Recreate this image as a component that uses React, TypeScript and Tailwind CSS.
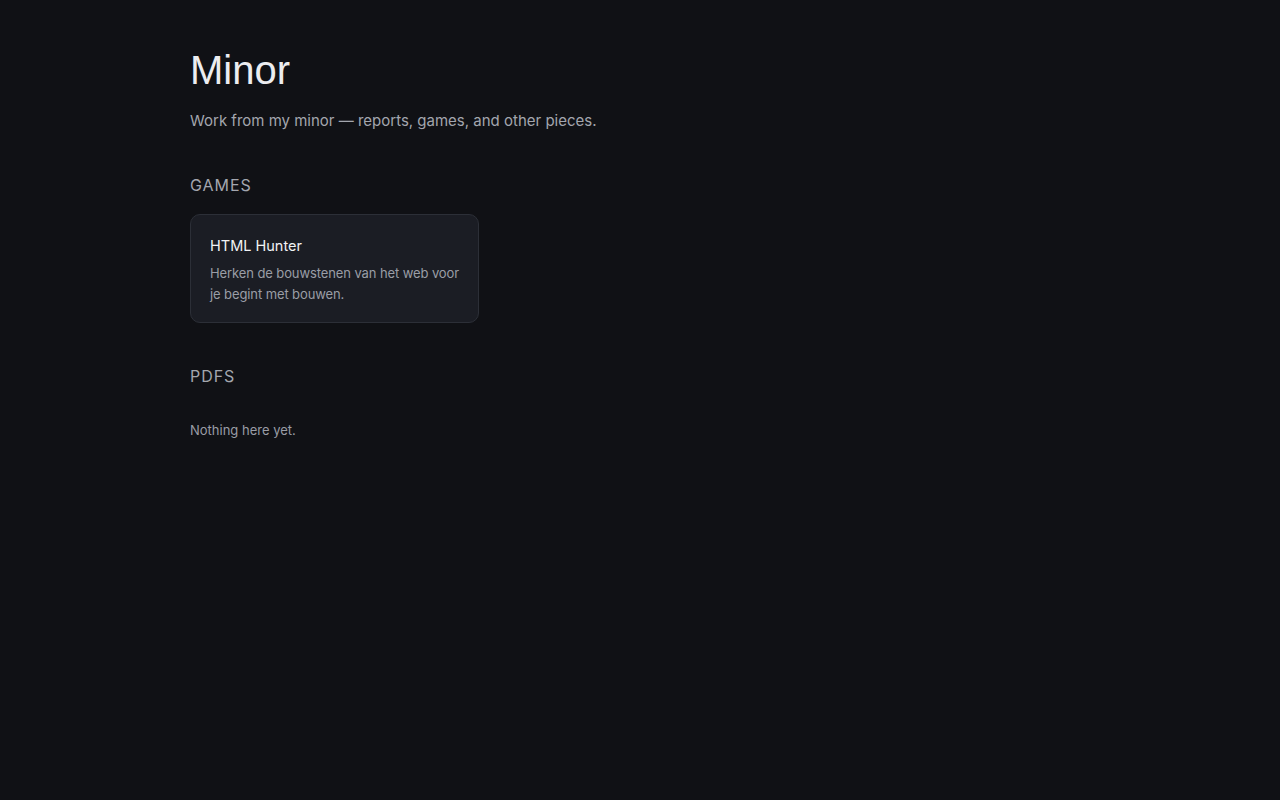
export default function App() {
  return (
    <div className="min-h-screen bg-[#101115] text-[#e6e7ea] font-['Inter',sans-serif]">
      <main className="max-w-[900px] mx-auto pt-[44px] pb-16">
        {/* Header */}
        <h1 className="text-[40px] leading-[52px] font-light text-[#ecedf0] font-['Liberation_Sans',sans-serif]">Minor</h1>
        <p className="mt-[14px] text-[15px] leading-[22px] text-[#a3a6ae]">
          Work from my minor — reports, games, and other pieces.
        </p>

        {/* Games */}
        <section className="mt-[42px]">
          <h2 className="text-[16px] leading-[22px] tracking-[0.06em] uppercase text-[#a3a6ae]">Games</h2>
          <div className="grid grid-cols-3 gap-4 mt-[18px]">
            <a className="block bg-[#1b1d24] border border-[#2c2f37] rounded-[10px] pl-[19px] pr-[12px] pt-[21px] pb-[17px]">
              <h3 className="text-[14.5px] leading-[20px] text-[#f1f2f4]">HTML Hunter</h3>
              <p className="mt-[7px] text-[13px] leading-[21px] tracking-[-0.1px] text-[#9a9da6]">
                Herken de bouwstenen van het web voor je begint met bouwen.
              </p>
            </a>
          </div>
        </section>

        {/* PDFs */}
        <section className="mt-[42px]">
          <h2 className="text-[16px] leading-[22px] tracking-[0.06em] uppercase text-[#a3a6ae]">PDFs</h2>
          <p className="mt-[33px] text-[13px] leading-[20px] text-[#9a9da6]">Nothing here yet.</p>
        </section>
      </main>
    </div>
  )
}
